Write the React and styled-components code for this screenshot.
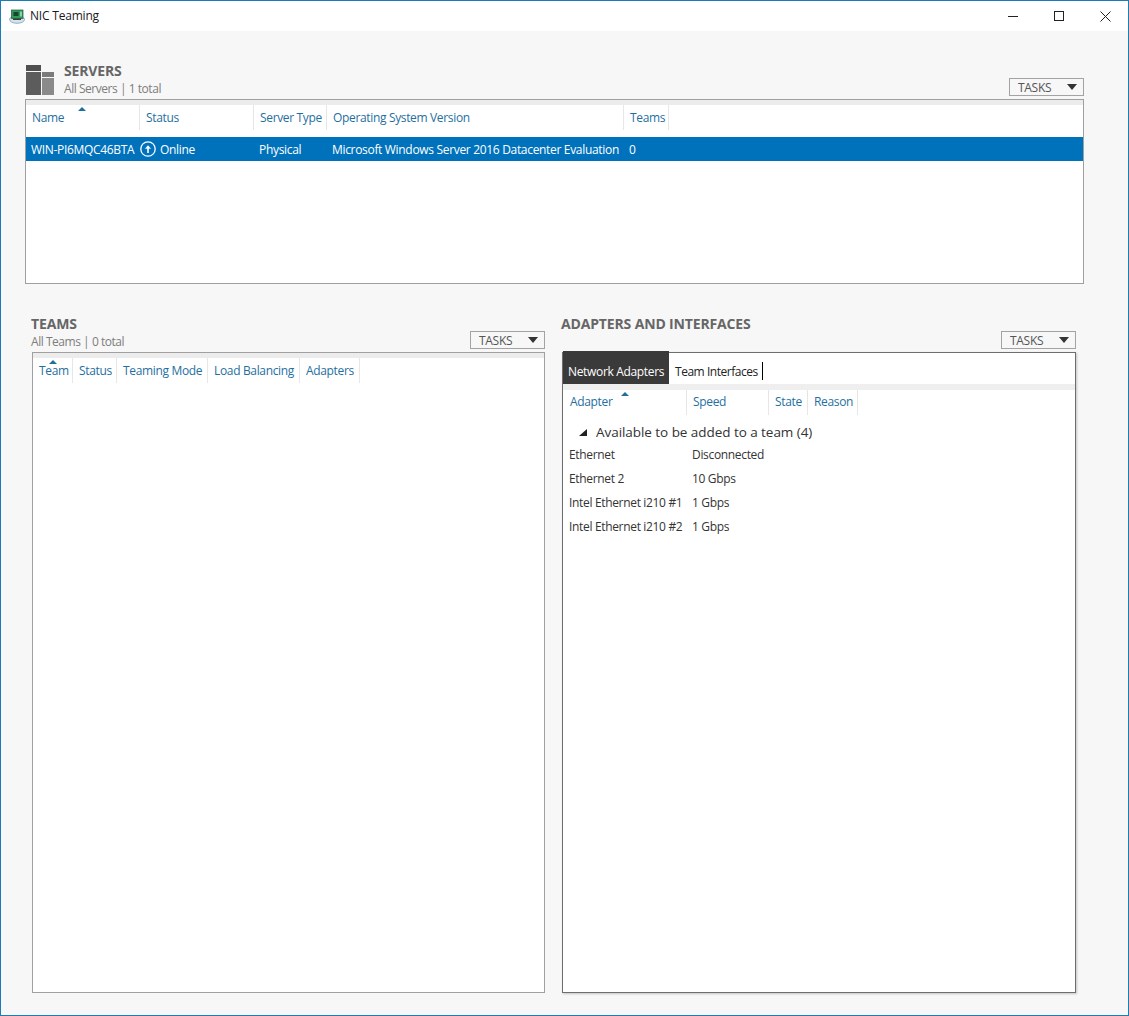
import React from "react";
import styled, { createGlobalStyle } from "styled-components";

const serverColumns = [
	{ label: "Name", width: 114, sorted: 52 },
	{ label: "Status", width: 114 },
	{ label: "Server Type", width: 73 },
	{ label: "Operating System Version", width: 297 },
	{ label: "Teams", width: 45 },
];

const teamColumns = [
	{ label: "Team", width: 40, sorted: 16 },
	{ label: "Status", width: 44 },
	{ label: "Teaming Mode", width: 91 },
	{ label: "Load Balancing", width: 92 },
	{ label: "Adapters", width: 60 },
];

const adapterColumns = [
	{ label: "Adapter", width: 123, sorted: 57 },
	{ label: "Speed", width: 82 },
	{ label: "State", width: 39 },
	{ label: "Reason", width: 50 },
];

const adapters = [
	{ name: "Ethernet", speed: "Disconnected" },
	{ name: "Ethernet 2", speed: "10 Gbps" },
	{ name: "Intel Ethernet i210 #1", speed: "1 Gbps" },
	{ name: "Intel Ethernet i210 #2", speed: "1 Gbps" },
];

const NicIcon = () => (
	<svg width="16" height="16" viewBox="0 0 16 16">
		<ellipse cx="8" cy="11.5" rx="7.5" ry="3.8" fill="#d5e4ec" stroke="#7fa0b4" strokeWidth="0.8" />
		<rect x="2.5" y="2" width="11.5" height="8.5" fill="#2f9a5c" stroke="#1d5b38" strokeWidth="0.7" />
		<rect x="4.5" y="4" width="5" height="4" fill="#14472b" />
		<rect x="11" y="3.5" width="2" height="5" fill="#8fd0a8" />
		<rect x="4" y="10.5" width="8" height="1.5" fill="#3a3a3a" />
	</svg>
);

const ServersIcon = () => (
	<svg width="28" height="30" viewBox="0 0 28 30">
		<rect x="0" y="0" width="15" height="6" fill="#4f4f4f" />
		<rect x="0" y="7" width="15" height="23" fill="#5c5c5c" />
		<rect x="16" y="7" width="12" height="5" fill="#7b7b7b" />
		<rect x="16" y="13" width="12" height="17" fill="#8a8a8a" />
	</svg>
);

const OnlineIcon = () => (
	<svg width="16" height="16" viewBox="0 0 16 16" fill="none" stroke="#fff">
		<circle cx="8" cy="8" r="7.2" strokeWidth="1.3" />
		<path d="M8 12V5.5" strokeWidth="1.6" />
		<path d="M5.3 7.6 8 4.6l2.7 3z" fill="#fff" strokeWidth="0.4" />
	</svg>
);

const Minimize = () => (
	<svg width="10" height="10" viewBox="0 0 10 10" stroke="#222">
		<path d="M0 5.5h10" />
	</svg>
);

const Maximize = () => (
	<svg width="10" height="10" viewBox="0 0 10 10" fill="none" stroke="#222">
		<rect x="0.5" y="0.5" width="9" height="9" />
	</svg>
);

const Close = () => (
	<svg width="11" height="11" viewBox="0 0 11 11" stroke="#222">
		<path d="M0.5 0.5l10 10M10.5 0.5l-10 10" />
	</svg>
);

const TableHeader = ({ columns, textTop = 5, inset = 0 }) => (
	<HeaderRow $inset={inset}>
		{columns.map((col) => (
			<HeaderCell key={col.label} $width={col.width} $top={textTop}>
				{col.sorted && <SortArrow $left={col.sorted} />}
				{col.label}
			</HeaderCell>
		))}
	</HeaderRow>
);

const Tasks = () => (
	<TasksButton>
		TASKS
		<Caret />
	</TasksButton>
);

export default function App() {
	return (
		<>
			<GlobalStyle />
			<Window>
				<TitleBar>
					<TitleLeft>
						<NicIcon />
						NIC Teaming
					</TitleLeft>
					<WindowButtons>
						<WindowButton><Minimize /></WindowButton>
						<WindowButton><Maximize /></WindowButton>
						<WindowButton><Close /></WindowButton>
					</WindowButtons>
				</TitleBar>
				<Content>
					<ServersSection>
						<ServersHead>
							<ServersTitle>
								<ServersIcon />
								<ServersText>
									<Heading>SERVERS</Heading>
									<SubHeading>All Servers | 1 total</SubHeading>
								</ServersText>
							</ServersTitle>
							<Tasks />
						</ServersHead>
						<ServersPanel>
							<TopStrip />
							<TableHeader columns={serverColumns} />
							<SelectedRow>
								<SelectedCell $width={109}>WIN-PI6MQC46BTA</SelectedCell>
								<SelectedCell $width={119}>
									<OnlineIcon />
									<OnlineText>Online</OnlineText>
								</SelectedCell>
								<SelectedCell $width={73}>Physical</SelectedCell>
								<SelectedCell $width={297}>Microsoft Windows Server 2016 Datacenter Evaluation</SelectedCell>
								<SelectedCell $width={40}>0</SelectedCell>
							</SelectedRow>
						</ServersPanel>
					</ServersSection>

					<LowerGrid>
						<Column>
							<LowerHead>
								<LowerText>
									<Heading>TEAMS</Heading>
									<SubHeading>All Teams | 0 total</SubHeading>
								</LowerText>
								<Tasks />
							</LowerHead>
							<LowerPanel>
								<TopStrip />
								<TableHeader columns={teamColumns} />
							</LowerPanel>
						</Column>
						<Column>
							<LowerHead>
								<LowerText>
									<Heading>ADAPTERS AND INTERFACES</Heading>
									<SubHeading>&nbsp;</SubHeading>
								</LowerText>
								<Tasks />
							</LowerHead>
							<LowerPanel $focused>
								<TabRow>
									<ActiveTab>Network Adapters</ActiveTab>
									<Tab>Team Interfaces</Tab>
									<TabCursor />
								</TabRow>
								<TabStrip />
								<TableHeader columns={adapterColumns} textTop={4} inset={1} />
								<GroupRow>
									<GroupArrow />
									Available to be added to a team (4)
								</GroupRow>
								{adapters.map((row) => (
									<AdapterRow key={row.name}>
										<AdapterName>{row.name}</AdapterName>
										<span>{row.speed}</span>
									</AdapterRow>
								))}
							</LowerPanel>
						</Column>
					</LowerGrid>
				</Content>
			</Window>
		</>
	);
}

const GlobalStyle = createGlobalStyle`
	html, body {
		margin: 0;
		padding: 0;
		background: #f7f7f7;
	}
	body {
		font-family: "Open Sans", "Liberation Sans", sans-serif;
		font-size: 12px;
		color: #333;
	}
`;

const Window = styled.div`
	width: 1129px;
	height: 1016px;
	box-sizing: border-box;
	border: 1px solid #1c7cb4;
	background: #f7f7f7;
	display: flex;
	flex-direction: column;
	overflow: hidden;
`;

const TitleBar = styled.div`
	height: 30px;
	flex: none;
	background: #fff;
	display: flex;
	align-items: center;
	justify-content: space-between;
`;

const TitleLeft = styled.div`
	display: flex;
	align-items: center;
	gap: 5px;
	padding: 0 0 1px 8px;
	color: #1a1a1a;
	font-size: 12px;
	letter-spacing: -0.2px;
`;

const WindowButtons = styled.div`
	display: flex;
`;

const WindowButton = styled.div`
	width: 46px;
	height: 29px;
	display: flex;
	align-items: center;
	justify-content: center;
`;

const Content = styled.div`
	flex: 1;
	padding: 34px 0 0 24px;
`;

const ServersSection = styled.section`
	width: 1059px;
`;

const ServersHead = styled.div`
	height: 34px;
	display: flex;
	justify-content: space-between;
	align-items: flex-end;
`;

const ServersTitle = styled.div`
	display: flex;
	gap: 10px;
	padding-left: 1px;
	align-items: flex-start;
	height: 34px;
`;

const ServersText = styled.div`
	margin-top: -2px;
`;

const Heading = styled.div`
	font-weight: 700;
	font-size: 14px;
	line-height: 16px;
	margin-bottom: 1px;
	color: #666;
	letter-spacing: -0.15px;
	white-space: nowrap;
`;

const SubHeading = styled.div`
	font-size: 12px;
	line-height: 18px;
	color: #7d7d7d;
	letter-spacing: -0.46px;
`;

const TasksButton = styled.div`
	width: 75px;
	height: 18px;
	box-sizing: border-box;
	margin-bottom: 3px;
	border: 1px solid #a3a3a3;
	display: flex;
	align-items: center;
	justify-content: space-between;
	padding: 0 6px 0 8px;
	color: #555;
	font-size: 12px;
	letter-spacing: -0.3px;
`;

const Caret = styled.span`
	width: 0;
	height: 0;
	border-left: 5.5px solid transparent;
	border-right: 5.5px solid transparent;
	border-top: 6px solid #333;
`;

const ServersPanel = styled.div`
	height: 185px;
	box-sizing: border-box;
	border: 1px solid #a0a0a0;
	background: #fff;
`;

const TopStrip = styled.div`
	height: 5px;
	background: #ececec;
`;

const HeaderRow = styled.div`
	display: flex;
	height: 25px;
	padding-left: ${(p) => p.$inset}px;
`;

const HeaderCell = styled.div`
	position: relative;
	width: ${(p) => p.$width}px;
	flex: none;
	box-sizing: border-box;
	padding: ${(p) => p.$top}px 0 0 6px;
	color: #1f6f9f;
	font-size: 12px;
	line-height: 16px;
	letter-spacing: -0.34px;
	white-space: nowrap;
	border-right: 1px solid #e6e6e6;
`;

const SortArrow = styled.span`
	position: absolute;
	top: 2px;
	left: ${(p) => p.$left}px;
	width: 0;
	height: 0;
	border-left: 4px solid transparent;
	border-right: 4px solid transparent;
	border-bottom: 4px solid #1f6f9f;
`;

const SelectedRow = styled.div`
	display: flex;
	align-items: center;
	height: 24px;
	margin-top: 7px;
	padding-left: 5px;
	background: #0072bc;
	color: #fff;
	font-size: 12px;
	letter-spacing: -0.32px;
`;

const SelectedCell = styled.div`
	width: ${(p) => p.$width}px;
	flex: none;
	display: flex;
	align-items: center;
	white-space: nowrap;
`;

const OnlineText = styled.span`
	margin-left: 4px;
`;

const LowerGrid = styled.div`
	display: grid;
	grid-template-columns: 514px 515px;
	column-gap: 16px;
	margin: 32px 0 0 6px;
`;

const Column = styled.div`
	display: flex;
	flex-direction: column;
`;

const LowerHead = styled.div`
	height: 36px;
	display: flex;
	justify-content: space-between;
	align-items: flex-end;
`;

const LowerText = styled.div`
	padding-bottom: 1px;
`;

const LowerPanel = styled.div`
	height: 641px;
	margin-left: 1px;
	box-sizing: border-box;
	background: #fff;
	border: 1px solid ${(p) => (p.$focused ? "#6e6e6e" : "#a0a0a0")};
	box-shadow: ${(p) => (p.$focused ? "1px 1px 2px #c4c4c4" : "none")};
`;

const TabRow = styled.div`
	display: flex;
	align-items: flex-start;
	height: 31px;
`;

const ActiveTab = styled.div`
	width: 106px;
	height: 33px;
	margin-top: -2px;
	box-sizing: border-box;
	padding: 13px 0 0 5px;
	line-height: 16px;
	background: #3a3a3a;
	color: #fff;
	font-size: 12px;
	letter-spacing: -0.33px;
	white-space: nowrap;
`;

const Tab = styled.div`
	margin: 11px 0 0 6px;
	line-height: 16px;
	color: #222;
	font-size: 12px;
	letter-spacing: -0.47px;
	white-space: nowrap;
`;

const TabCursor = styled.div`
	width: 1px;
	height: 18px;
	margin: 9px 0 0 4px;
	background: #000;
`;

const TabStrip = styled.div`
	height: 6px;
	background: #efefef;
`;

const GroupRow = styled.div`
	display: flex;
	align-items: center;
	height: 20px;
	margin-top: 7px;
	padding-left: 16px;
	font-size: 13.5px;
	color: #333;
	letter-spacing: -0.05px;
	gap: 9px;
`;

const GroupArrow = styled.span`
	width: 0;
	height: 0;
	border-left: 8px solid transparent;
	border-bottom: 7px solid #222;
`;

const AdapterRow = styled.div`
	display: flex;
	align-items: center;
	height: 24px;
	padding-left: 6px;
	color: #333;
	font-size: 12px;
	letter-spacing: -0.33px;
`;

const AdapterName = styled.span`
	width: 123px;
	flex: none;
	white-space: nowrap;
`;
